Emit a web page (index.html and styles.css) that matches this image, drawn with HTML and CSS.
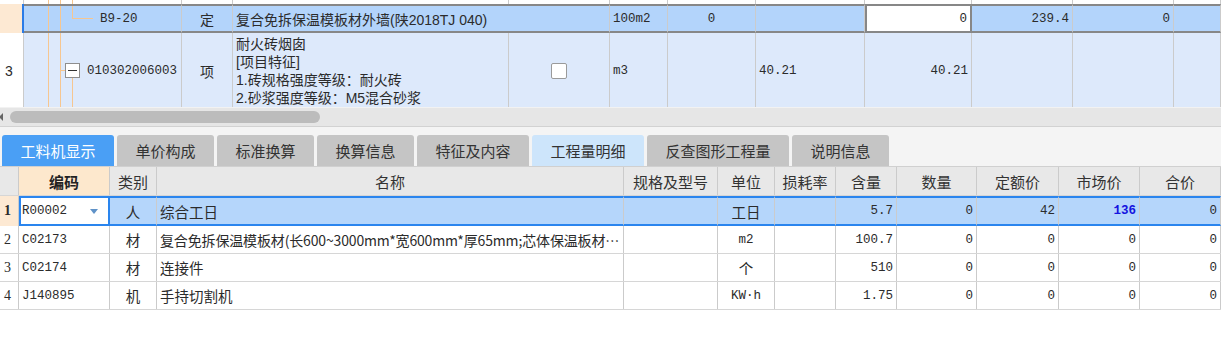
FILE: index.html
```html
<!DOCTYPE html>
<html lang="zh-CN">
  <head>
    <meta charset="UTF-8" />
    <title>工料机显示</title>
    <link rel="stylesheet" href="styles.css">
  </head>
  <body>
    <div class="upper">
      <div class="row top-cols row-stub">
        <div class="cell rownum"></div>
        <div class="cell tree tree-stub"></div>
        <div class="cell"></div>
        <div class="cell"></div>
        <div class="cell"></div>
        <div class="cell"></div>
        <div class="cell"></div>
        <div class="cell"></div>
        <div class="cell"></div>
        <div class="cell"></div>
        <div class="cell"></div>
        <div class="cell"></div>
      </div>
      <div class="row top-cols row-sel">
        <div class="cell rownum"></div>
        <div class="cell tree tree-leaf mono">B9-20</div>
        <div class="cell center">定</div>
        <div class="cell span2">复合免拆保温模板材外墙(陕2018TJ 040)</div>
        <div class="cell mono">100m2</div>
        <div class="cell center mono">0</div>
        <div class="cell"></div>
        <div class="cell edit right mono">0</div>
        <div class="cell right mono">239.4</div>
        <div class="cell right mono">0</div>
        <div class="cell"></div>
      </div>
      <div class="row top-cols row-item">
        <div class="cell rownum sans">3</div>
        <div class="cell tree tree-node mono"><span class="toggle"></span><span class="code">010302006003</span></div>
        <div class="cell center">项</div>
        <div class="cell multi">
          <div>耐火砖烟囱</div>
          <div>[项目特征]</div>
          <div>1.砖规格强度等级：耐火砖</div>
          <div>2.砂浆强度等级：M5混合砂浆</div>
        </div>
        <div class="cell center"><span class="check"></span></div>
        <div class="cell mono">m3</div>
        <div class="cell"></div>
        <div class="cell mono">40.21</div>
        <div class="cell right mono">40.21</div>
        <div class="cell"></div>
        <div class="cell"></div>
        <div class="cell"></div>
      </div>
    </div>

    <div class="hscroll">
      <span class="arrow"></span>
      <span class="thumb"></span>
    </div>

    <div class="tabs">
      <div class="tab active w112">工料机显示</div>
      <div class="tab w97">单价构成</div>
      <div class="tab w97">标准换算</div>
      <div class="tab w97">换算信息</div>
      <div class="tab w112">特征及内容</div>
      <div class="tab light w112">工程量明细</div>
      <div class="tab w142">反查图形工程量</div>
      <div class="tab w97">说明信息</div>
    </div>

    <div class="lower">
      <div class="row low-cols row-head">
        <div class="cell"></div>
        <div class="cell center key">编码</div>
        <div class="cell center">类别</div>
        <div class="cell center">名称</div>
        <div class="cell center">规格及型号</div>
        <div class="cell center">单位</div>
        <div class="cell center">损耗率</div>
        <div class="cell center">含量</div>
        <div class="cell center">数量</div>
        <div class="cell center">定额价</div>
        <div class="cell center">市场价</div>
        <div class="cell center">合价</div>
      </div>
      <div class="row low-cols row-cur">
        <div class="cell rownum num-serif bold">1</div>
        <div class="cell code-edit mono">R00002<span class="drop"></span></div>
        <div class="cell center">人</div>
        <div class="cell">综合工日</div>
        <div class="cell"></div>
        <div class="cell center">工日</div>
        <div class="cell"></div>
        <div class="cell right mono">5.7</div>
        <div class="cell right mono">0</div>
        <div class="cell right mono">42</div>
        <div class="cell right mono price">136</div>
        <div class="cell right mono">0</div>
      </div>
      <div class="row low-cols">
        <div class="cell rownum num-serif">2</div>
        <div class="cell mono">C02173</div>
        <div class="cell center">材</div>
        <div class="cell"><span class="clip">复合免拆保温模板材(长600~3000mm*宽600mm*厚65mm;芯体保温板材…</span></div>
        <div class="cell"></div>
        <div class="cell center mono">m2</div>
        <div class="cell"></div>
        <div class="cell right mono">100.7</div>
        <div class="cell right mono">0</div>
        <div class="cell right mono">0</div>
        <div class="cell right mono">0</div>
        <div class="cell right mono">0</div>
      </div>
      <div class="row low-cols">
        <div class="cell rownum num-serif">3</div>
        <div class="cell mono">C02174</div>
        <div class="cell center">材</div>
        <div class="cell">连接件</div>
        <div class="cell"></div>
        <div class="cell center">个</div>
        <div class="cell"></div>
        <div class="cell right mono">510</div>
        <div class="cell right mono">0</div>
        <div class="cell right mono">0</div>
        <div class="cell right mono">0</div>
        <div class="cell right mono">0</div>
      </div>
      <div class="row low-cols">
        <div class="cell rownum num-serif">4</div>
        <div class="cell mono">J140895</div>
        <div class="cell center">机</div>
        <div class="cell">手持切割机</div>
        <div class="cell"></div>
        <div class="cell center mono">KW·h</div>
        <div class="cell"></div>
        <div class="cell right mono">1.75</div>
        <div class="cell right mono">0</div>
        <div class="cell right mono">0</div>
        <div class="cell right mono">0</div>
        <div class="cell right mono">0</div>
      </div>
    </div>
  </body>
</html>
```

FILE: styles.css
```css
body {
  margin: 0;
  width: 1221px;
  height: 358px;
  overflow: hidden;
  background: #ffffff;
  font-family: "Noto Sans CJK SC", "Noto Sans", sans-serif;
  font-size: 14px;
  color: #2b2b2b;
}

* {
  box-sizing: border-box;
}

/* shared grid rows */
.row {
  display: grid;
}

.top-cols {
  grid-template-columns: 24px 158px 51px 276px 101px 58px 88px 109px 107px 101px 101px 47px;
}

.low-cols {
  grid-template-columns: 19px 91px 47px 467px 94px 57px 61px 61px 80px 82px 81px 81px;
}

.cell {
  display: flex;
  align-items: center;
  min-width: 0;
  padding: 0 3px;
  overflow: hidden;
  white-space: nowrap;
  border-right: 1px solid #cbcbcb;
}

.center {
  justify-content: center;
}

.right {
  justify-content: flex-end;
}

.mono {
  font-family: "Liberation Mono", "Noto Sans CJK SC", monospace;
  font-size: 12.5px;
}

.sans {
  font-family: "Liberation Sans", sans-serif;
}

.span2 {
  grid-column: span 2;
}

/* upper grid */
.upper {
  height: 107px;
  overflow: hidden;
  font-family: "Liberation Sans", "Noto Sans CJK SC", sans-serif;
}

.row-stub {
  height: 4px;
}

.row-sel {
  height: 29px;
  background: #b3d4fb;
}

.row-sel .cell {
  border-top: 2px solid #878787;
  border-bottom: 2px solid #878787;
}

.row-sel .rownum {
  border-top: 0;
  border-bottom: 0;
  border-right: 2px solid #2b7be6;
  background: #fde9d3;
}

.row-sel .edit {
  background: #ffffff;
  border-left: 2px solid #878787;
  border-right: 2px solid #878787;
}

.row-item {
  height: 75px;
  background: #dde9fb;
}

.row-item .rownum {
  background: #ffffff;
  padding-left: 5px;
}

.multi {
  flex-direction: column;
  align-items: flex-start;
  justify-content: center;
  line-height: 18px;
}

/* tree connectors */
.tree {
  background-repeat: no-repeat;
}

.tree-stub {
  background-image: linear-gradient(#f6c690, #f6c690), linear-gradient(#f6c690, #f6c690), linear-gradient(#f6c690, #f6c690);
  background-size: 1px 100%, 1px 100%, 1px 100%;
  background-position: 24px 0, 36px 0, 48px 0;
}

.tree-leaf {
  padding-left: 76px;
  background-image: linear-gradient(#f6c690, #f6c690), linear-gradient(#f6c690, #f6c690), linear-gradient(#f6c690, #f6c690), linear-gradient(#f6c690, #f6c690);
  background-size: 1px 100%, 1px 100%, 1px 13px, 21px 1px;
  background-position: 24px 0, 36px 0, 48px 0, 48px 12px;
}

.tree-node {
  padding-left: 41px;
  background-image: linear-gradient(#f6c690, #f6c690), linear-gradient(#f6c690, #f6c690), linear-gradient(#f6c690, #f6c690), linear-gradient(#f6c690, #f6c690);
  background-size: 1px 100%, 1px 100%, 5px 1px, 1px calc(50% - 7px);
  background-position: 24px 0, 36px 0, 36px 50%, 48px 100%;
}

.toggle {
  width: 15px;
  height: 15px;
  flex: none;
  border: 1px solid #8e8e8e;
  background: linear-gradient(#333333, #333333) center / 9px 1px no-repeat, #ffffff;
}

.code {
  margin-left: 7px;
}

.check {
  width: 16px;
  height: 16px;
  border: 1px solid #9a9a9a;
  border-radius: 2px;
  background: #ffffff;
}

/* horizontal scrollbar */
.hscroll {
  height: 20px;
  display: flex;
  align-items: center;
  background: #e6e6e6;
  border-top: 1px solid #f2f2f2;
  border-bottom: 1px solid #d2d2d2;
}

.arrow {
  width: 0;
  height: 0;
  margin-left: -1px;
  border-right: 4px solid #666666;
  border-top: 4px solid transparent;
  border-bottom: 4px solid transparent;
}

.thumb {
  width: 310px;
  height: 12px;
  margin-left: 7px;
  border-radius: 6px;
  background: #bcbcbc;
}

/* tab strip */
.tabs {
  height: 39px;
  display: flex;
  align-items: flex-end;
  gap: 3px;
  padding-left: 2px;
  background: #f4f4f4;
  font-size: 15px;
}

.tab {
  height: 31px;
  display: flex;
  align-items: center;
  justify-content: center;
  border-radius: 3px 3px 0 0;
  background: #c5c5c5;
  color: #333333;
}

.tab.active {
  background: #4a9ff5;
  color: #ffffff;
}

.tab.light {
  background: #cde5fb;
}

.w97 { width: 97px; }
.w112 { width: 112px; }
.w142 { width: 142px; }

/* lower grid */
.lower {
  font-size: 14.5px;
}

.row-head {
  height: 30px;
  background: #e8e8e8;
  border-top: 1px solid #d0d0d0;
  color: #333333;
  font-size: 15px;
}

.row-head .key {
  background: #fde8cd;
  font-weight: bold;
  color: #222222;
}

.lower .row {
  border-bottom: 1px solid #d6d6d6;
}

.lower .row:not(.row-head):not(.row-cur) {
  height: 28px;
}

.row-cur {
  height: 30px;
  background: #b5d6fb;
  border-bottom: 0 !important;
}

.row-cur .cell {
  border-top: 2px solid #2a85ee;
  border-bottom: 2px solid #2a85ee;
}

.row-cur .rownum {
  border-top: 0;
  border-bottom: 0;
  background: #fde9d3;
}

.row-cur .code-edit {
  background: #ffffff;
  border: 2px solid #2a85ee;
  padding-left: 1px;
}

.drop {
  margin-left: auto;
  margin-right: 7px;
  width: 0;
  height: 0;
  border-top: 5px solid #5f92c8;
  border-left: 4px solid transparent;
  border-right: 4px solid transparent;
}

.rownum {
  padding-left: 4px;
}

.num-serif {
  font-family: "Liberation Serif", serif;
  font-size: 14px;
}

.bold {
  font-weight: bold;
}

.price {
  color: #1414e0;
  font-weight: bold;
}

.clip {
  font-size: 14px;
  letter-spacing: -0.15px;
  overflow: hidden;
  text-overflow: ellipsis;
}
```
